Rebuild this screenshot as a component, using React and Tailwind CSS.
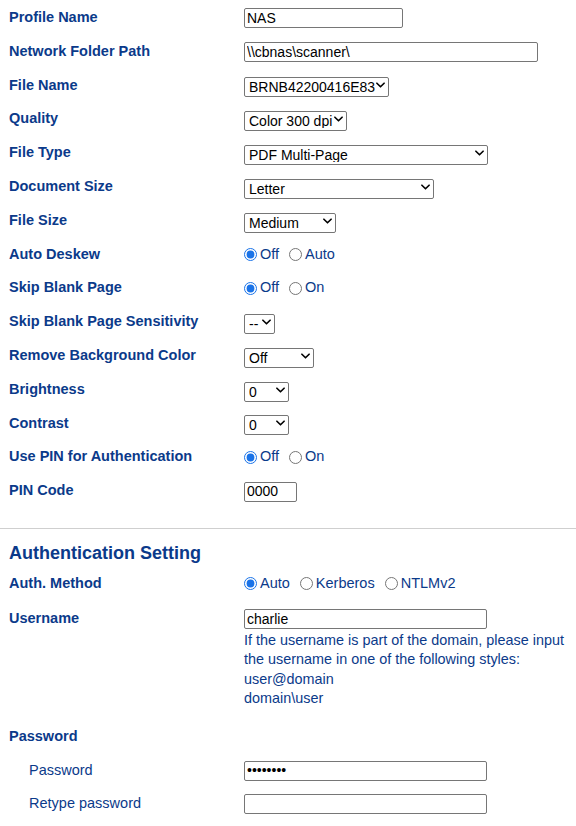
import { useState } from 'react';

const navy = 'text-[#0b3a8a]';

function Chevron() {
    return (
        <svg viewBox="0 0 10 6" className="pointer-events-none absolute right-[4px] top-1/2 -translate-y-1/2 w-[9px] h-[6px]">
            <path d="M1 1l4 4 4-4" fill="none" stroke="black" strokeWidth="1.8" strokeLinecap="round" strokeLinejoin="round" />
        </svg>
    );
}

function Select({ value, width }) {
    return (
        <div className={`relative h-[20px] ${width}`}>
            <select defaultValue={value} className="appearance-none w-full h-full border border-[#767676] rounded-[2px] bg-white pl-[4px] pr-[12px] text-[14px] text-black leading-none outline-none">
                <option>{value}</option>
            </select>
            <Chevron />
        </div>
    );
}

function Input({ value, width, type = 'text' }) {
    return (
        <input type={type} defaultValue={value} className={`h-[20px] ${width} border border-[#767676] rounded-[2px] bg-white px-[2px] text-[14px] text-black outline-none`} />
    );
}

function Radios({ name, options, checked }) {
    const [sel, setSel] = useState(checked);
    return (
        <div className={`flex items-center gap-[10px] text-[14.5px] ${navy}`}>
            {options.map((o) => (
                <label key={o} className="flex items-center gap-[3px]">
                    <input type="radio" name={name} checked={sel === o} onChange={() => setSel(o)} className="m-0 w-[13px] h-[13px] accent-[#1a73e8]" />
                    <span>{o}</span>
                </label>
            ))}
        </div>
    );
}

function Row({ label, children }) {
    return (
        <div className="flex items-center h-[33.8px]">
            <div className={`w-[235px] shrink-0 font-bold text-[14.5px] ${navy}`}>{label}</div>
            <div>{children}</div>
        </div>
    );
}

export default function App() {
    return (
        <div className="w-[576px] min-h-[826px] bg-white font-['Liberation_Sans',Arial,sans-serif]">
            <div className="pl-[9px] pt-[1px]">
                <Row label="Profile Name"><Input value="NAS" width="w-[159px]" /></Row>
                <Row label="Network Folder Path"><Input value="\\cbnas\scanner\" width="w-[294px]" /></Row>
                <Row label="File Name"><Select value="BRNB42200416E83" width="w-[145px]" /></Row>
                <Row label="Quality"><Select value="Color 300 dpi" width="w-[103px]" /></Row>
                <Row label="File Type"><Select value="PDF Multi-Page" width="w-[244px]" /></Row>
                <Row label="Document Size"><Select value="Letter" width="w-[190px]" /></Row>
                <Row label="File Size"><Select value="Medium" width="w-[92px]" /></Row>
                <Row label="Auto Deskew"><Radios name="deskew" options={['Off', 'Auto']} checked="Off" /></Row>
                <Row label="Skip Blank Page"><Radios name="skip" options={['Off', 'On']} checked="Off" /></Row>
                <Row label="Skip Blank Page Sensitivity"><Select value="--" width="w-[31px]" /></Row>
                <Row label="Remove Background Color"><Select value="Off" width="w-[70px]" /></Row>
                <Row label="Brightness"><Select value="0" width="w-[45px]" /></Row>
                <Row label="Contrast"><Select value="0" width="w-[45px]" /></Row>
                <Row label="Use PIN for Authentication"><Radios name="pin" options={['Off', 'On']} checked="Off" /></Row>
                <Row label="PIN Code"><Input value="0000" width="w-[53px]" /></Row>
            </div>

            <div className="mt-[20px] border-t border-[#cfcfcf]"></div>

            <div className="pl-[9px]">
                <h2 className={`pt-[12px] text-[18px] leading-[24px] font-bold ${navy}`}>Authentication Setting</h2>
                <div className="mt-[2px]">
                    <Row label="Auth. Method"><Radios name="auth" options={['Auto', 'Kerberos', 'NTLMv2']} checked="Auto" /></Row>
                </div>

                <div className="flex mt-[6px]">
                    <div className={`w-[235px] shrink-0 pt-[1px] font-bold text-[14.5px] leading-[20px] ${navy}`}>Username</div>
                    <div>
                        <Input value="charlie" width="w-[243px]" />
                        <p className={`text-[14.4px] leading-[19.5px] ${navy}`}>
                            If the username is part of the domain, please input<br />
                            the username in one of the following styles:<br />
                            user@domain<br />
                            domain\user
                        </p>
                    </div>
                </div>

                <div className={`mt-[17px] font-bold text-[14.5px] leading-[20px] ${navy}`}>Password</div>
                <div className="mt-[8px]">
                    <div className="flex items-center h-[34px]">
                        <div className={`w-[235px] shrink-0 pl-[20px] text-[14.5px] ${navy}`}>Password</div>
                        <Input type="password" value="charlie1" width="w-[243px]" />
                    </div>
                    <div className="flex items-center h-[33px]">
                        <div className={`w-[235px] shrink-0 pl-[20px] text-[14.5px] ${navy}`}>Retype password</div>
                        <Input type="password" value="" width="w-[243px]" />
                    </div>
                </div>
            </div>
        </div>
    );
}
